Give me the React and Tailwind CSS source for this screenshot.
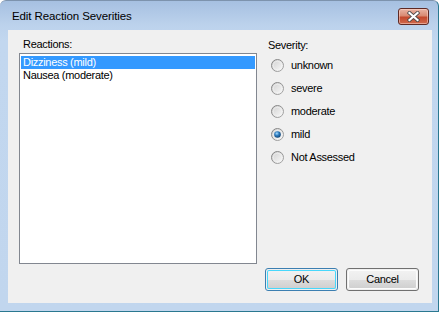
import React from 'react';

const font = "font-['Liberation_Sans',Arial,sans-serif]";

function Radio({ checked }) {
  return (
    <svg width="13" height="13" viewBox="0 0 13 13" className="shrink-0">
      <defs>
        <linearGradient id="rRing" x1="0" y1="0" x2="1" y2="1">
          <stop offset="0" stopColor="#7d7d7d" />
          <stop offset="1" stopColor="#a9a9a9" />
        </linearGradient>
        <linearGradient id="rFill" x1="0" y1="0" x2="1" y2="1">
          <stop offset="0" stopColor="#cfcfcf" />
          <stop offset="1" stopColor="#fbfbfb" />
        </linearGradient>
        <radialGradient id="rDot" cx="0.4" cy="0.35" r="0.7">
          <stop offset="0" stopColor="#a6dcff" />
          <stop offset="0.45" stopColor="#2f7dc0" />
          <stop offset="1" stopColor="#0f3f6d" />
        </radialGradient>
      </defs>
      <circle cx="6.5" cy="6.5" r="6" fill="url(#rFill)" stroke="url(#rRing)" strokeWidth="1" />
      <circle cx="6.5" cy="6.5" r="4.2" fill="none" stroke="#f4f4f4" strokeWidth="0.8" opacity="0.7" />
      {checked && <circle cx="6.5" cy="6.5" r="3.3" fill="url(#rDot)" />}
    </svg>
  );
}

function Button({ children, isDefault }) {
  return (
    <div
      className={
        'w-[73px] h-[23px] rounded-[3px] border p-px ' +
        (isDefault ? 'border-[#3c7fb1]' : 'border-[#707070]')
      }
    >
      <div
        className={
          'w-full h-full rounded-[2px] flex items-center justify-center text-[11px] text-black tracking-[-0.3px] bg-[linear-gradient(180deg,#f2f2f2_0%,#ebebeb_50%,#dddddd_51%,#cfcfcf_100%)] ' +
          (isDefault ? 'shadow-[inset_0_0_0_1px_#48d7fb]' : 'shadow-[inset_0_0_0_1px_#fcfcfc]')
        }
      >
        {children}
      </div>
    </div>
  );
}

export default function App() {
  const severities = ['unknown', 'severe', 'moderate', 'mild', 'Not Assessed'];

  return (
    <div
      className={
        font +
        ' w-[439px] h-[312px] flex flex-col rounded-t-[6px] border-r border-b border-t border-r-[#2a7890] border-b-[#2a7890] border-t-[#7d93ad] bg-[linear-gradient(180deg,#a6c0e1_0px,#bcd2ec_24px,#c2d7ef_40px,#c1d6ee_100%)]'
      }
    >
      {/* title bar */}
      <div className="h-[29px] flex items-start justify-between pl-[12px] pr-[9px] pt-[7px]">
        <div className="text-[11.5px] leading-[14px] mt-[1px] text-black tracking-[-0.1px]">
          Edit Reaction Severities
        </div>
        <div className="w-[31px] h-[17px] rounded-[3px] border border-[#5e2a25] bg-[linear-gradient(180deg,#e9b4a4_0%,#d98a72_45%,#c4492d_55%,#cf6a4e_100%)] shadow-[inset_0_0_0_1px_rgba(255,220,210,0.5)] flex items-center justify-center">
          <svg width="13" height="11" viewBox="0 0 13 11">
            <path d="M2.5 2 L10.5 9 M10.5 2 L2.5 9" stroke="#4a4a4a" strokeWidth="3.8" strokeLinecap="square" />
            <path d="M2.5 2 L10.5 9 M10.5 2 L2.5 9" stroke="#ffffff" strokeWidth="2.2" strokeLinecap="square" />
          </svg>
        </div>
      </div>

      {/* client frame */}
      <div className="flex-1 pl-[8px] pr-[6px] pb-[8px] flex">
        <div className="flex-1 bg-[#f0f0f0] flex flex-col pt-[8px] pb-[12px] text-[11px] text-black tracking-[-0.3px]">
          <div className="flex pl-[11px]">
            <div className="w-[238px] flex flex-col">
              <div className="h-[13px] leading-[13px] pl-[4px]">Reactions:</div>
              <div className="mt-[2px] h-[211px] bg-white border border-[#828790] p-px">
                <div className="h-[13px] leading-[13px] bg-[#3399ff] text-white pl-[2px] mt-px">Dizziness (mild)</div>
                <div className="h-[13px] leading-[13px] pl-[2px]">Nausea (moderate)</div>
              </div>
            </div>
            <div className="ml-[11px] flex flex-col">
              <div className="h-[13px] leading-[13px] mt-[1px]">Severity:</div>
              <div className="flex flex-col mt-[2px]">
                {severities.map((s) => (
                  <div key={s} className="h-[23px] flex items-center pl-[3px] gap-[7px]">
                    <Radio checked={s === 'mild'} />
                    <span className="leading-[13px]">{s}</span>
                  </div>
                ))}
              </div>
            </div>
          </div>
          <div className="mt-[4px] flex justify-end gap-[8px] pr-[13px]">
            <Button isDefault>OK</Button>
            <Button>Cancel</Button>
          </div>
        </div>
      </div>
    </div>
  );
}
